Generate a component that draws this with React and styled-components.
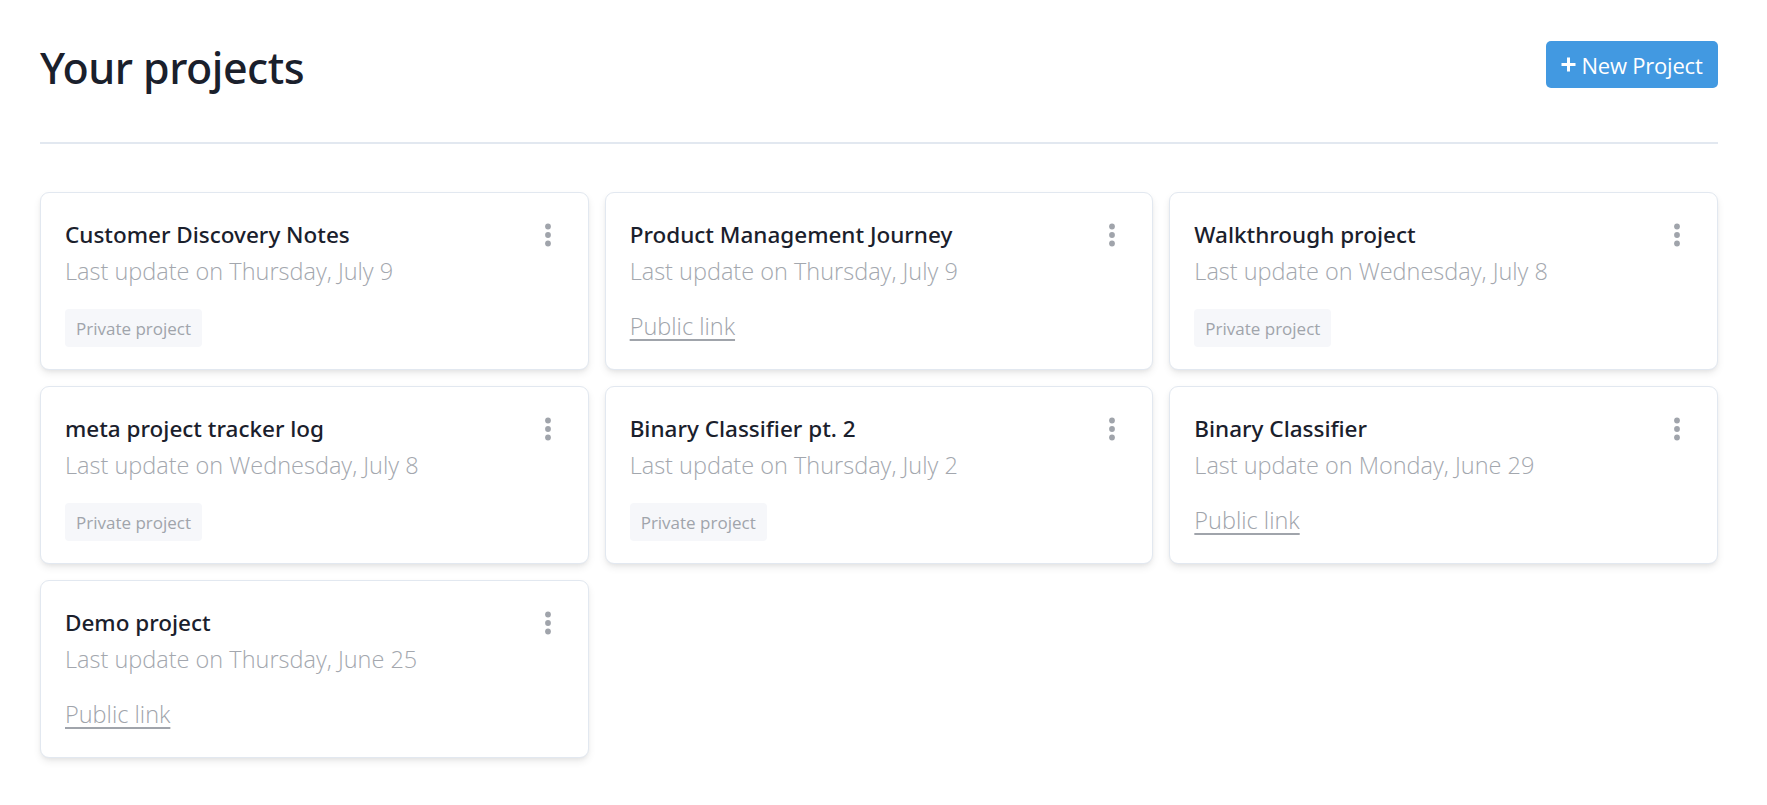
import React from "react";
import styled, { createGlobalStyle } from "styled-components";

const GlobalStyle = createGlobalStyle`
  html, body { margin: 0; padding: 0; background: #ffffff; }
  body { font-family: "Open Sans", "Noto Sans", sans-serif; color: #1a202c; }
  * { box-sizing: border-box; }
`;

const Page = styled.main`
  padding: 30px 49px 40px 40px;
`;

const Header = styled.header`
  display: flex;
  align-items: flex-start;
  justify-content: space-between;
  height: 70px;
  box-sizing: content-box;
  padding-bottom: 42px;
  border-bottom: 2px solid #e2e8f0;
`;

const Title = styled.h1`
  margin: 10px 0 0;
  font-family: "Noto Sans", "Open Sans", sans-serif;
  font-size: 43px;
  line-height: 56px;
  font-weight: 500;
  color: #1a202c;
  letter-spacing: -0.5px;
`;

const NewButton = styled.button`
  display: inline-flex;
  align-items: center;
  justify-content: center;
  gap: 5px;
  height: 47px;
  width: 172px;
  margin-top: 11px;
  border: none;
  border-radius: 5px;
  background: #4299e1;
  color: #ffffff;
  font-family: inherit;
  font-size: 22px;
  font-weight: 400;
  letter-spacing: -0.2px;
  cursor: pointer;
`;

const Grid = styled.section`
  display: grid;
  grid-template-columns: repeat(3, 1fr);
  gap: 16px;
  margin-top: 48px;
`;

const Card = styled.article`
  height: 178px;
  border: 1.5px solid #e2e8f0;
  border-radius: 9px;
  background: #ffffff;
  box-shadow: 0 4px 8px -1px rgba(0, 0, 0, 0.09), 0 2px 4px -1px rgba(0, 0, 0, 0.05);
  padding: 26px 24px 0 24px;
  display: flex;
  flex-direction: column;
`;

const CardHead = styled.div`
  display: flex;
  justify-content: space-between;
  align-items: flex-start;
`;

const CardTitle = styled.h2`
  margin: 0;
  font-family: "Noto Sans", "Open Sans", sans-serif;
  font-size: 22.5px;
  line-height: 32px;
  font-weight: 500;
  color: #1a202c;
`;

const Updated = styled.p`
  margin: 4px 0 0;
  font-size: 23.5px;
  line-height: 32px;
  font-weight: 300;
  color: #a3a7ae;
`;

const Footer = styled.div`
  margin-top: 22px;
  height: 38px;
  display: flex;
  align-items: center;
`;

const Badge = styled.span`
  display: inline-flex;
  align-items: center;
  height: 38px;
  padding: 0 11px;
  border-radius: 4px;
  background: #f6f7fa;
  color: #a0a4ab;
  font-size: 17px;
`;

const PublicLink = styled.a`
  margin-top: -4px;
  font-size: 23.5px;
  font-weight: 300;
  color: #a0a4ab;
  text-decoration: underline;
  text-underline-offset: 4px;
  text-decoration-thickness: 1.5px;
`;

const Kebab = styled.button`
  width: 32px;
  height: 32px;
  border: none;
  background: transparent;
  padding: 0;
  display: flex;
  align-items: center;
  justify-content: center;
  cursor: pointer;
  color: #a0a4ab;
`;

const KebabIcon = () => (
  <svg width="8" height="26" viewBox="0 0 8 26" fill="currentColor">
    <circle cx="4" cy="4.5" r="2.9" />
    <circle cx="4" cy="13" r="2.9" />
    <circle cx="4" cy="21.5" r="2.9" />
  </svg>
);

const PlusIcon = () => (
  <svg width="15" height="15" viewBox="0 0 15 15" fill="none" stroke="currentColor" strokeWidth="3" strokeLinecap="butt">
    <path d="M7.5 0.5v14M0.5 7.5h14" />
  </svg>
);

const projects = [
  { name: "Customer Discovery Notes", date: "Thursday, July 9", isPublic: false },
  { name: "Product Management Journey", date: "Thursday, July 9", isPublic: true },
  { name: "Walkthrough project", date: "Wednesday, July 8", isPublic: false },
  { name: "meta project tracker log", date: "Wednesday, July 8", isPublic: false },
  { name: "Binary Classifier pt. 2", date: "Thursday, July 2", isPublic: false },
  { name: "Binary Classifier", date: "Monday, June 29", isPublic: true },
  { name: "Demo project", date: "Thursday, June 25", isPublic: true },
];

export default function App() {
  return (
    <>
      <GlobalStyle />
      <Page>
        <Header>
          <Title>Your projects</Title>
          <NewButton>
            <PlusIcon />
            New Project
          </NewButton>
        </Header>
        <Grid>
          {projects.map((p) => (
            <Card key={p.name}>
              <CardHead>
                <CardTitle>{p.name}</CardTitle>
                <Kebab aria-label="More options">
                  <KebabIcon />
                </Kebab>
              </CardHead>
              <Updated>Last update on {p.date}</Updated>
              <Footer>
                {p.isPublic ? (
                  <PublicLink href="#">Public link</PublicLink>
                ) : (
                  <Badge>Private project</Badge>
                )}
              </Footer>
            </Card>
          ))}
        </Grid>
      </Page>
    </>
  );
}
